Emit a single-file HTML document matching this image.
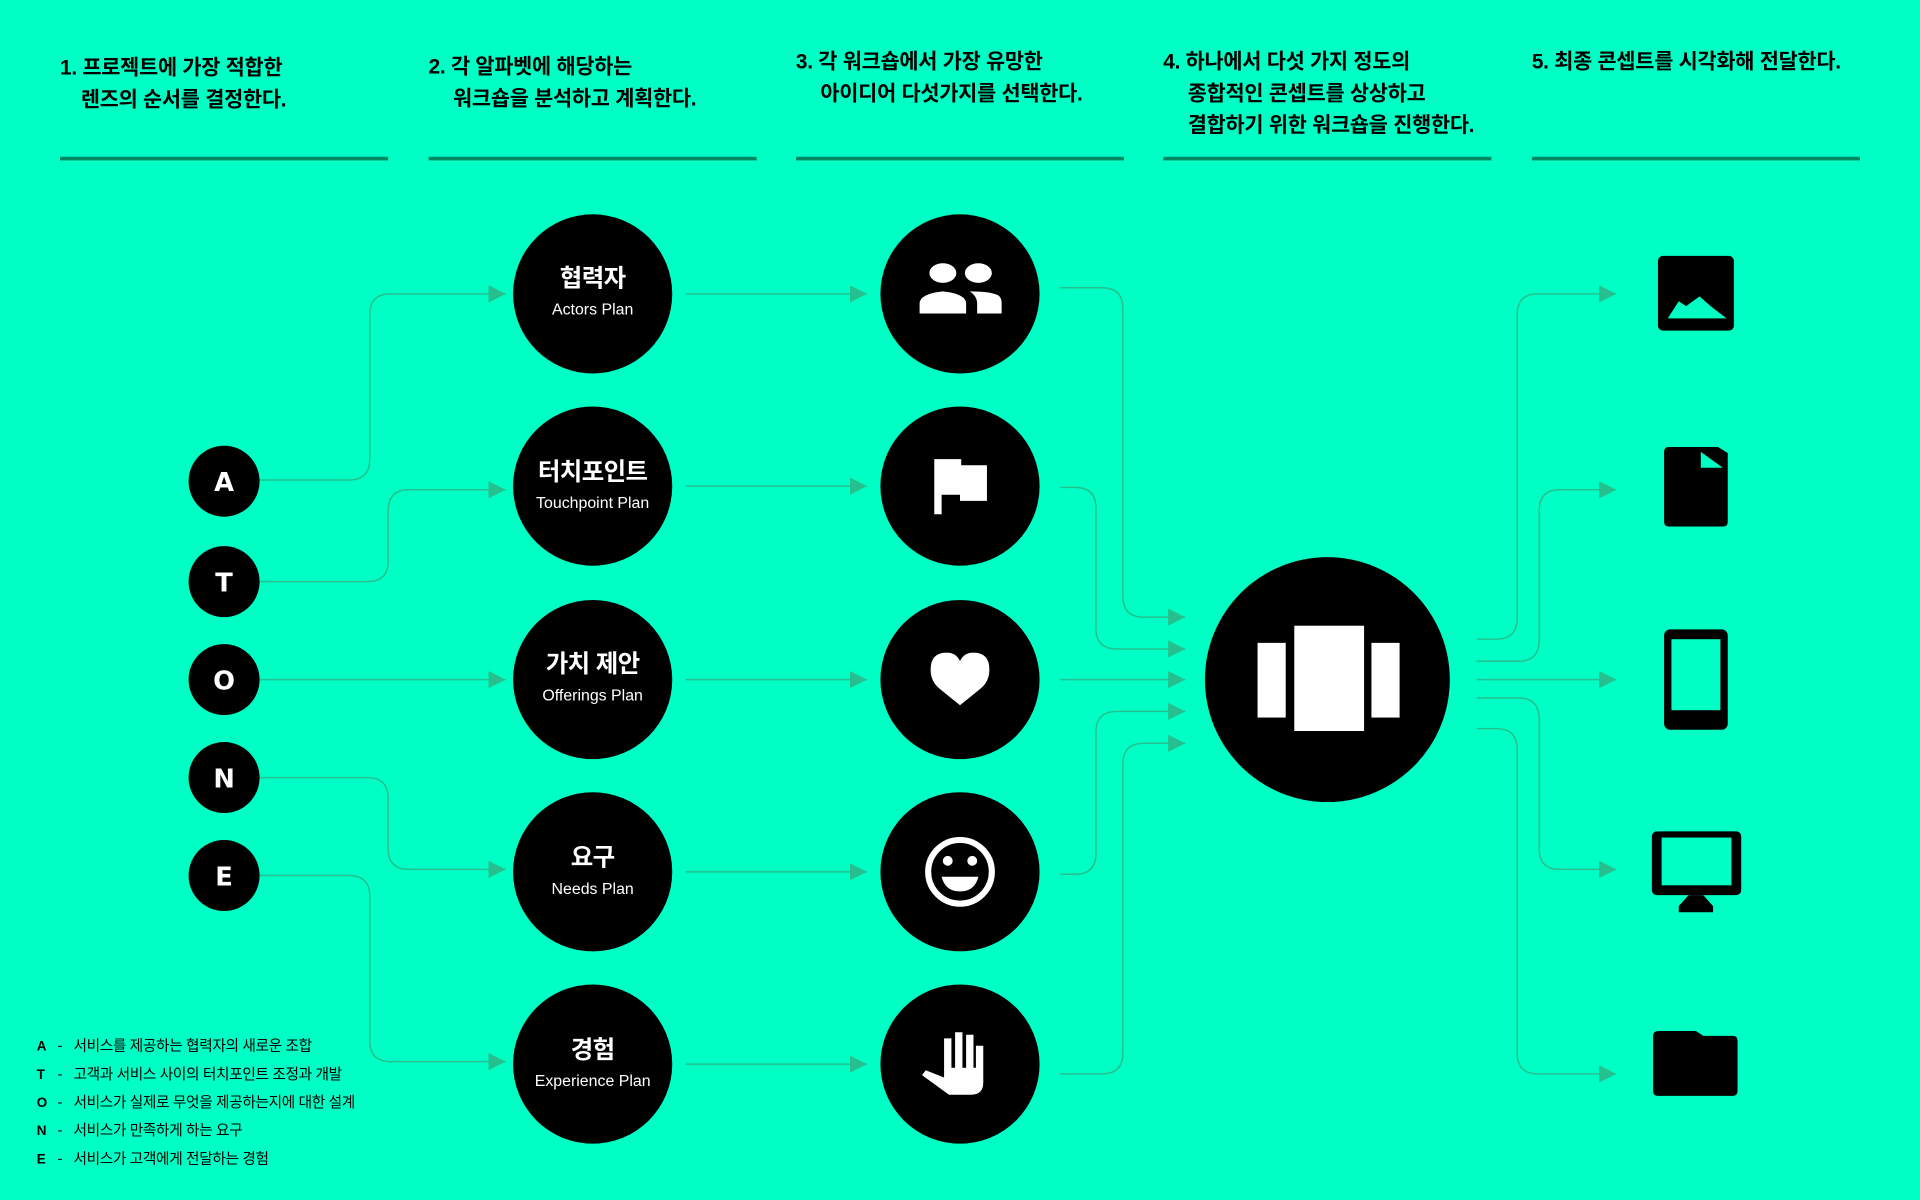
<!DOCTYPE html>
<html><head><meta charset="utf-8"><style>
html,body{margin:0;padding:0;background:#00FFC4;}
svg{display:block}
text{font-family:"Liberation Sans","Noto Sans CJK KR",sans-serif;}
.h{font-size:17px;font-weight:700;letter-spacing:-0.2px;fill:#000}
.k{font-size:20px;font-weight:700;fill:#fff;text-anchor:middle;letter-spacing:-0.5px}
.e{font-size:13px;fill:#fff;text-anchor:middle;font-weight:500}
.L{font-size:21px;font-weight:900;fill:#fff;text-anchor:middle;font-family:"DejaVu Sans","Liberation Sans",sans-serif}
.g{font-size:12px;fill:#000;letter-spacing:-0.3px}
.gl{font-size:11px;fill:#000;font-weight:700;font-family:"DejaVu Sans",sans-serif}
.c{fill:none;stroke:#25C08E;stroke-width:1.2}
</style></head><body>
<svg width="1920" height="1200" viewBox="0 0 1568 980" xmlns="http://www.w3.org/2000/svg">
<rect width="1568" height="980" fill="#00FFC4"/>
<defs><marker id="a" viewBox="0 0 10 10" refX="10" refY="5" markerWidth="14" markerHeight="14" markerUnits="userSpaceOnUse" orient="auto"><path d="M0 0L10 5L0 10z" fill="#25C08E"/></marker></defs>
<g class="h">
<text x="49" y="61">1. 프로젝트에 가장 적합한</text><text x="66" y="87">렌즈의 순서를 결정한다.</text>
<text x="350" y="60">2. 각 알파벳에 해당하는</text><text x="370" y="86">워크숍을 분석하고 계획한다.</text>
<text x="650" y="56">3. 각 워크숍에서 가장 유망한</text><text x="670" y="82">아이디어 다섯가지를 선택한다.</text>
<text x="950" y="56">4. 하나에서 다섯 가지 정도의</text><text x="970" y="82">종합적인 콘셉트를 상상하고</text><text x="970" y="108">결합하기 위한 워크숍을 진행한다.</text>
<text x="1251" y="56">5. 최종 콘셉트를 시각화해 전달한다.</text>
</g>
<g fill="#008A64"><rect x="49" y="128" width="268" height="3"/><rect x="350" y="128" width="268" height="3"/><rect x="650" y="128" width="268" height="3"/><rect x="950" y="128" width="268" height="3"/><rect x="1251" y="128" width="268" height="3"/></g>
<g class="c" marker-end="url(#a)">
<path d="M212 392H285q17 0 17-17V257q0-17 17-17H413"/>
<path d="M212 475H300q17 0 17-17V417q0-17 17-17H413"/>
<path d="M212 555H413"/>
<path d="M212 635H300q17 0 17 17V693q0 17 17 17H413"/>
<path d="M212 715H285q17 0 17 17V850q0 17 17 17H413"/>
<path d="M560 240H708"/><path d="M560 397H708"/><path d="M560 555H708"/><path d="M560 712H708"/><path d="M560 869H708"/>
<path d="M866 235H900q17 0 17 17V487q0 17 17 17H968"/>
<path d="M866 398H878q17 0 17 17V513q0 17 17 17H968"/>
<path d="M866 555H968"/>
<path d="M866 714H878q17 0 17-17V598q0-17 17-17H968"/>
<path d="M866 877H900q17 0 17-17V624q0-17 17-17H968"/>
<path d="M1206 522H1222q17 0 17-17V257q0-17 17-17H1320"/>
<path d="M1206 540H1240q17 0 17-17V417q0-17 17-17H1320"/>
<path d="M1206 555H1320"/>
<path d="M1206 570H1240q17 0 17 17V693q0 17 17 17H1320"/>
<path d="M1206 595H1222q17 0 17 17V860q0 17 17 17H1320"/>
</g>
<g fill="#000"><circle cx="183" cy="393" r="29"/><circle cx="183" cy="475" r="29"/><circle cx="183" cy="555" r="29"/><circle cx="183" cy="635" r="29"/><circle cx="183" cy="715" r="29"/></g>
<text class="L" x="183" y="401">A</text><text class="L" x="183" y="483">T</text><text class="L" x="183" y="563">O</text><text class="L" x="183" y="643">N</text><text class="L" x="183" y="723">E</text>
<g fill="#000"><circle cx="484" cy="240" r="65"/><circle cx="484" cy="397" r="65"/><circle cx="484" cy="555" r="65"/><circle cx="484" cy="712" r="65"/><circle cx="484" cy="869" r="65"/>
<circle cx="784" cy="240" r="65"/><circle cx="784" cy="397" r="65"/><circle cx="784" cy="555" r="65"/><circle cx="784" cy="712" r="65"/><circle cx="784" cy="869" r="65"/>
<circle cx="1084" cy="555" r="100"/></g>
<text class="k" x="484" y="234">협력자</text><text class="e" x="484" y="257">Actors Plan</text>
<text class="k" x="484" y="392">터치포인트</text><text class="e" x="484" y="415">Touchpoint Plan</text>
<text class="k" x="484" y="549">가치 제안</text><text class="e" x="484" y="572">Offerings Plan</text>
<text class="k" x="484" y="707">요구</text><text class="e" x="484" y="730">Needs Plan</text>
<text class="k" x="484" y="864">경험</text><text class="e" x="484" y="887">Experience Plan</text>
<g fill="#fff">
<ellipse cx="770" cy="223" rx="11" ry="8"/><ellipse cx="799" cy="223" rx="11" ry="8"/>
<path d="M751 256v-8q0-8 19-10q19 2 19 10v8z"/><path d="M792 238q16 0 23 3q3 2 3 6v9h-20v-8q0-6-6-10z"/>
<path d="M763 375h22v5h21v29h-22v-5h-15v16h-6z"/>
<path d="M784 576l-16-13q-8-6-8-16q0-14 13-14q8 0 11 7q3-7 11-7q13 0 13 14q0 10-8 16z"/>
<path d="M771 848h6v24h3v-29h6v29h3v-27h6v27h2v-18h6v30q0 10-10 10h-18l-22-16l3-4l15 6z"/>
</g>
<circle cx="784" cy="712" r="26" fill="none" stroke="#fff" stroke-width="5"/>
<circle cx="774" cy="703" r="4" fill="#fff"/><circle cx="794" cy="703" r="4" fill="#fff"/>
<path d="M769 716h30q-3 12-15 12q-12 0-15-12z" fill="#fff"/>
<g fill="#fff"><rect x="1027" y="525" width="23" height="61"/><rect x="1057" y="511" width="57" height="86"/><rect x="1120" y="525" width="23" height="61"/></g>
<g fill="#000">
<rect x="1354" y="209" width="62" height="61" rx="4"/>
<path d="M1362 260h48l-13-10l-9-8l-11 8l-6-4z" fill="#00FFC4"/>
<path d="M1363 365h40l8 5v56q0 4-4 4h-44q-4 0-4-4v-57q0-4 4-4z"/>
<path d="M1389 369v13h18z" fill="#00FFC4"/>
<rect x="1359" y="514" width="52" height="82" rx="5"/><rect x="1365" y="522" width="40" height="58" fill="#00FFC4"/>
<rect x="1349" y="679" width="73" height="52" rx="4"/><rect x="1357" y="684" width="57" height="39" fill="#00FFC4"/>
<path d="M1379 731h12l8 9v5h-28v-5z"/>
<path d="M1355 842h30l6 4h24q4 0 4 4v41q0 4-4 4h-61q-4 0-4-4v-45q0-4 5-4z"/>
</g>
<g class="gl"><text x="30" y="858">A</text><text x="30" y="881">T</text><text x="30" y="904">O</text><text x="30" y="927">N</text><text x="30" y="950">E</text></g>
<g class="g"><text x="47" y="858">-</text><text x="47" y="881">-</text><text x="47" y="904">-</text><text x="47" y="927">-</text><text x="47" y="950">-</text>
<text x="60" y="858">서비스를 제공하는 협력자의 새로운 조합</text>
<text x="60" y="881">고객과 서비스 사이의 터치포인트 조정과 개발</text>
<text x="60" y="904">서비스가 실제로 무엇을 제공하는지에 대한 설계</text>
<text x="60" y="927">서비스가 만족하게 하는 요구</text>
<text x="60" y="950">서비스가 고객에게 전달하는 경험</text></g>
</svg>
</body></html>
